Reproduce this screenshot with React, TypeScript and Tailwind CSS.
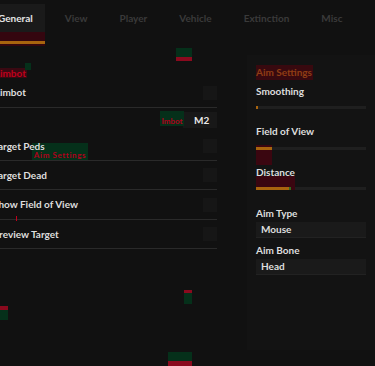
import React from 'react';

const font = { fontFamily: 'Lato, "Noto Sans", sans-serif' };

const tabs = ['General', 'View', 'Player', 'Vehicle', 'Extinction', 'Misc'];

function Tab({ label, active }: { label: string; active: boolean }) {
    return (
        <div className="flex flex-col">
            <div
                className={`h-[28px] px-3 flex items-center text-[10px] font-bold ${active ? 'bg-[#1a1a1a] text-[#e4e4e4]' : 'text-[#3a3a3a]'}`}
            >
                {label}
            </div>
            {active && (
                <div className="h-[14px] bg-[#34060f] flex flex-col justify-end pb-[2px]">
                    <div className="h-[3px] bg-[#a8640e]" />
                </div>
            )}
        </div>
    );
}

function CheckRow({ label, tall }: { label: string; tall?: boolean }) {
    return (
        <div className={`${tall ? 'h-[30px]' : 'h-[29px]'} flex items-center justify-between border-b border-[#2a2a2a]`}>
            <span className="relative z-10 text-[10px] font-bold text-[#dedede]">{label}</span>
            <div className="w-[14px] h-[14px] bg-[#161616]" />
        </div>
    );
}

function Label({ children, className = '' }: { children: React.ReactNode; className?: string }) {
    return <div className={`text-[10px] leading-[12px] font-bold text-[#dedede] ${className}`}>{children}</div>;
}

function Select({ value }: { value: string }) {
    return (
        <div className="h-[16px] bg-[#1a1a1a] border-b border-[#222] flex items-center pl-[5px] text-[10px] font-bold text-[#dedede]">
            {value}
        </div>
    );
}

export default function App() {
    return (
        <div className="relative w-[375px] h-[366px] overflow-hidden bg-[#111111]" style={font}>
            {/* Tab bar */}
            <div className="flex gap-2 pt-[4px] ml-[-14px]">
                {tabs.map((t, i) => (
                    <Tab key={t} label={t} active={i === 0} />
                ))}
            </div>

            <div className="flex">
                {/* Left column */}
                <div className="ml-[-7px] w-[224px] shrink-0 pt-[22px]">
                    <div className="w-fit h-[10px] bg-[#3a0912] text-[#c0001c] text-[10px] leading-[10px] font-bold pr-[1px]">
                        Aimbot
                    </div>
                    <CheckRow label="Aimbot" tall />
                    <div className="h-[24px] flex items-center justify-end">
                        <div className="w-[34px] h-[16px] bg-[#181818] flex items-center pl-[11px] text-[10px] font-bold text-[#e8e8e8]">
                            M2
                        </div>
                    </div>
                    <CheckRow label="Target Peds" />
                    <CheckRow label="Target Dead" />
                    <CheckRow label="Show Field of View" tall />
                    <CheckRow label="Preview Target" />
                </div>

                {/* Right column */}
                <div className="ml-[30px] mt-[9px] h-[295px] flex-1 bg-[#131313] px-[9px] pt-[10px]">
                    <div className="w-fit h-[15px] leading-[15px] bg-[#38090f] text-[#8f3d14] text-[10px] font-bold pr-[1px]">
                        Aim Settings
                    </div>
                    <Label className="mt-[5px]">Smoothing</Label>
                    <div className="relative mt-[9px] h-[3px] bg-[#1f1f1f]">
                        <div className="absolute left-0 top-0 h-[3px] w-[2px] bg-[#a8640e]" />
                    </div>

                    <Label className="mt-[16px]">Field of View</Label>
                    <div className="relative mt-[10px] h-[3px] bg-[#1f1f1f]">
                        <div className="absolute left-0 top-[-2px] w-[16px] h-[20px] bg-[#3a0610]" />
                        <div className="absolute left-0 top-0 w-[16px] h-[3px] bg-[#a8640e]" />
                    </div>

                    <Label className="mt-[16px]">Distance</Label>
                    <div className="relative mt-[9px] h-[3px] bg-[#1f1f1f]">
                        <div className="absolute left-0 top-[-11px] w-[39px] h-[14px] bg-[#3a0610]" />
                        <div className="absolute left-0 top-0 w-[33px] h-[3px] bg-[#a8640e]" />
                        <div className="absolute left-[33px] top-0 w-[2px] h-[3px] bg-[#2e6a1e]" />
                    </div>

                    <Label className="mt-[17px]">Aim Type</Label>
                    <div className="mt-[3px]">
                        <Select value="Mouse" />
                    </div>
                    <Label className="mt-[6px]">Aim Bone</Label>
                    <div className="mt-[3px]">
                        <Select value="Head" />
                    </div>
                </div>
            </div>

            {/* Debug overlays */}
            <div className="absolute left-[176px] top-[48px] w-[16px] h-[9px] bg-[#05301a]" />
            <div className="absolute left-[176px] top-[57px] w-[16px] h-[4px] bg-[#8a0a1e]" />
            <div className="absolute left-[25px] top-[63px] w-[6px] h-[7px] bg-[#05301a]" />

            <div className="absolute left-[160px] top-[111px] w-[24px] h-[15px] bg-[#05301a] flex items-end justify-center">
                <span className="text-[8px] leading-[10px] font-bold text-[#b0001c] whitespace-nowrap">Imbot</span>
            </div>

            <div className="absolute left-[32px] top-[143px] w-[56px] h-[17px] bg-[#05301a] flex items-end justify-center">
                <span className="text-[8px] leading-[10px] font-bold tracking-[0.6px] text-[#b0001c] whitespace-nowrap">Aim Settings</span>
            </div>

            <div className="absolute left-[16px] top-[216px] w-[1px] h-[5px] bg-[#c0001c]" />

            <div className="absolute left-0 top-[306px] w-[8px] h-[4px] bg-[#8a0a1e]" />
            <div className="absolute left-0 top-[310px] w-[8px] h-[10px] bg-[#05301a]" />
            <div className="absolute left-[184px] top-[290px] w-[8px] h-[3px] bg-[#8a0a1e]" />
            <div className="absolute left-[184px] top-[293px] w-[8px] h-[11px] bg-[#05301a]" />
            <div className="absolute left-[168px] top-[352px] w-[24px] h-[9px] bg-[#05301a]" />
            <div className="absolute left-[168px] top-[361px] w-[24px] h-[5px] bg-[#8a0a1e]" />
        </div>
    );
}
